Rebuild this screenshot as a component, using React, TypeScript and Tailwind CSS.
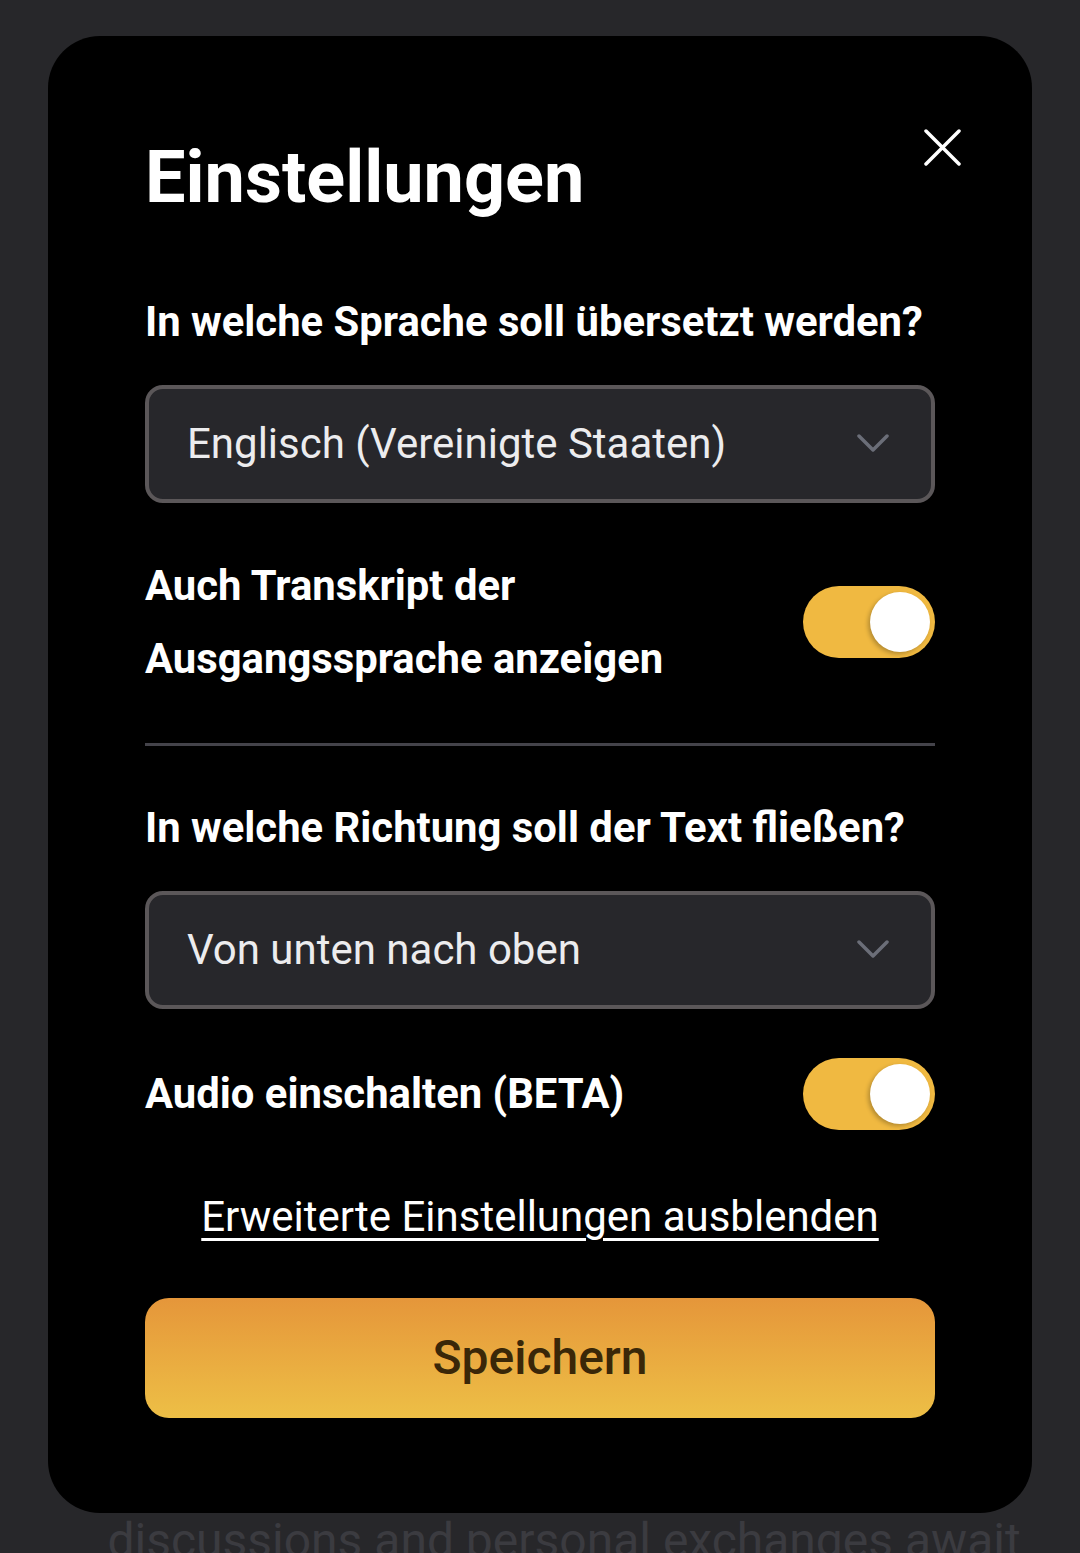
import React from "react";

function Chevron() {
  return (
    <svg width="32" height="20" viewBox="0 0 32 20" fill="none" className="shrink-0">
      <path d="M2 2 L16 16 L30 2" stroke="#6b6e78" strokeWidth="3.5" strokeLinecap="round" strokeLinejoin="round" />
    </svg>
  );
}

function Select({ value }: { value: string }) {
  return (
    <div className="flex h-[118px] items-center justify-between rounded-[18px] border-[4px] border-[#5b5759] bg-[#27272b] pl-[38px] pr-[42px]">
      <span className="text-[42px] leading-[48px] text-[#ececee]">{value}</span>
      <Chevron />
    </div>
  );
}

function Toggle() {
  return (
    <div className="flex h-[72px] w-[132px] shrink-0 items-center justify-end rounded-full bg-[#f0b941] pr-[5px]">
      <div className="h-[60px] w-[60px] rounded-full bg-white shadow-[-2px_2px_4px_rgba(0,0,0,0.25)]" />
    </div>
  );
}

export default function App() {
  return (
    <div
      className="flex h-[1553px] w-[1080px] flex-col items-center overflow-hidden bg-[#27272a] pt-[36px]"
      style={{ fontFamily: "Roboto, 'Noto Sans', sans-serif" }}
    >
      <div className="relative w-[984px] shrink-0 rounded-[52px] bg-black px-[97px] pt-[106px] pb-[95px] text-white">
        {/* close */}
        <button className="absolute right-[71px] top-[93px] block">
          <svg width="37" height="37" viewBox="0 0 37 37" fill="none" className="block">
            <path d="M2 2 L35 35 M35 2 L2 35" stroke="white" strokeWidth="3.5" strokeLinecap="round" />
          </svg>
        </button>

        <h1 className="text-[72px] font-bold leading-[72px]">Einstellungen</h1>

        <h2 className="mt-[84px] text-[41.8px] font-bold leading-[48px]">
          In welche Sprache soll übersetzt werden?
        </h2>
        <div className="mt-[39px]">
          <Select value="Englisch (Vereinigte Staaten)" />
        </div>

        <div className="mt-[46px] flex items-center justify-between">
          <p className="text-[41.8px] font-bold leading-[73px]">
            Auch Transkript der
            <br />
            Ausgangssprache anzeigen
          </p>
          <Toggle />
        </div>

        <div className="mt-[48px] h-[3px] bg-[#44434a]" />

        <h2 className="mt-[58px] text-[41.8px] font-bold leading-[48px]">
          In welche Richtung soll der Text fließen?
        </h2>
        <div className="mt-[39px]">
          <Select value="Von unten nach oben" />
        </div>

        <div className="mt-[49px] flex items-center justify-between">
          <p className="text-[41.8px] font-bold leading-[72px]">Audio einschalten (BETA)</p>
          <Toggle />
        </div>

        <div className="mt-[63px] text-center">
          <a className="text-[42px] leading-[48px] underline decoration-[3px] underline-offset-[7px]">
            Erweiterte Einstellungen ausblenden
          </a>
        </div>

        <button className="mt-[57px] flex h-[120px] w-full items-center justify-center rounded-[24px] bg-gradient-to-b from-[#e5963a] to-[#edbf46] text-[48px] font-medium text-[#3a2708]">
          Speichern
        </button>
      </div>

      <p className="mt-[4px] w-full whitespace-nowrap pl-[48px] text-center text-[48px] leading-[48px] text-[#3b3b40]">
        discussions and personal exchanges await
      </p>
    </div>
  );
}
